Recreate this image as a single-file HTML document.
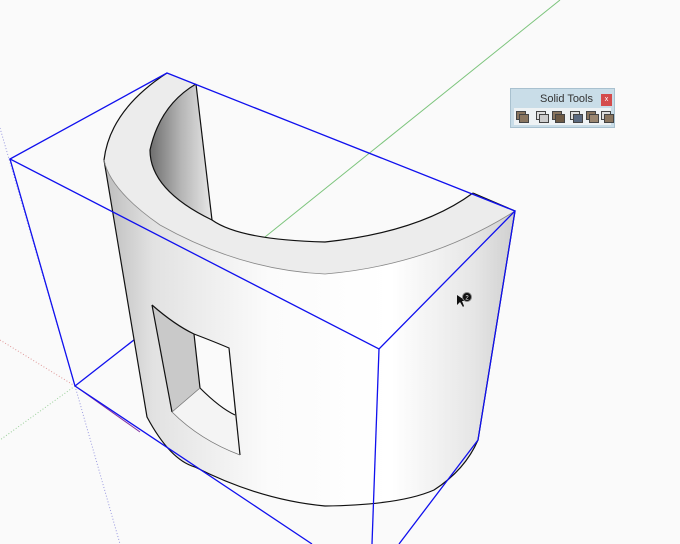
<!DOCTYPE html>
<html><head><meta charset="utf-8"><style>
body{margin:0;width:680px;height:544px;overflow:hidden;background:#fafafa;font-family:"Liberation Sans",sans-serif}
svg{position:absolute;left:0;top:0}
#tb{position:absolute;left:510px;top:88px;width:105px;height:40px;background:#c9dde8;border:1px solid #a9c1cf;box-sizing:border-box}
#tb .t{position:absolute;left:29px;top:4px;font-size:11px;color:#333}
#tb .x{position:absolute;left:90px;top:5px;width:11px;height:12px;background:#d44c4c;color:#fff;font-size:7px;text-align:center;line-height:12px}
#tb .bar{position:absolute;left:3px;top:19px;width:97px;height:17px;background:#eef2f4}
#tb .i{position:absolute;top:22px;width:12px;height:11px}
#tb .i b{position:absolute;width:8px;height:7px;background:#8a7660;border:1px solid #444}
</style></head><body>
<svg width="680" height="544" viewBox="0 0 680 544">
<defs>
<linearGradient id="cyl" x1="104" y1="0" x2="515" y2="0" gradientUnits="userSpaceOnUse">
<stop offset="0" stop-color="#bdbdbd"/><stop offset="0.12" stop-color="#e2e2e2"/><stop offset="0.4" stop-color="#fbfbfb"/><stop offset="0.7" stop-color="#ffffff"/><stop offset="0.9" stop-color="#e6e6e6"/><stop offset="1" stop-color="#cfcfcf"/>
</linearGradient>
<linearGradient id="inn" x1="150" y1="0" x2="212" y2="0" gradientUnits="userSpaceOnUse">
<stop offset="0" stop-color="#6e6e6e"/><stop offset="0.5" stop-color="#b5b5b5"/><stop offset="1" stop-color="#e8e8e8"/>
</linearGradient>
</defs>
<line x1="560" y1="0" x2="265" y2="237" stroke="#7cc47c" stroke-width="1"/>
<line x1="0" y1="128" x2="75" y2="386" stroke="#9a9ae0" stroke-width="1" stroke-dasharray="1,2"/>
<line x1="75" y1="386" x2="120" y2="544" stroke="#9a9ae0" stroke-width="1" stroke-dasharray="1,2"/>
<line x1="0" y1="340" x2="75" y2="386" stroke="#e09a9a" stroke-width="1" stroke-dasharray="1,2"/>
<line x1="75" y1="386" x2="0" y2="440" stroke="#9ad09a" stroke-width="1" stroke-dasharray="1,2"/>
<line x1="75" y1="386" x2="140" y2="432" stroke="#8030a0" stroke-width="1"/>
<line x1="75" y1="386" x2="139" y2="336" stroke="#1010ee" stroke-width="1.3"/>
<!-- cylinder body -->
<path d="M104,160 Q110,190 160,225 Q240,270 325,274 Q430,265 515,211 L478,440 Q465,470 434,490 Q400,505 325,506 Q260,500 195,467 Q170,460 147,417 Z" fill="url(#cyl)"/>
<!-- top ring face -->
<path d="M167,73 Q110,110 104,160 Q110,190 160,225 Q240,270 325,274 Q430,265 515,211 L473,193 Q420,232 325,242 Q240,240 212,220 Q150,190 150,150 Q160,105 196,84 Z" fill="#ececec"/>
<path d="M196,84 Q160,105 150,150 Q150,190 212,220 Z" fill="url(#inn)"/>
<!-- window -->
<path d="M152,305 Q175,325 194,334 Q215,342 229,348 L240,455 Q200,440 172,412 Z" fill="#c9c9c9"/>
<path d="M172,412 L200,388 Q220,408 235,415 L240,455 Q200,440 172,412 Z" fill="#f4f4f4"/>
<path d="M194,334 Q215,342 229,348 L235,415 Q220,408 200,388 Z" fill="#fafafa"/>
<g fill="none" stroke="#111" stroke-width="1.2">
<path d="M152,305 Q175,325 194,334 Q215,342 229,348 L240,455"/>
<path d="M194,334 L200,388 Q220,408 235,415"/>
<path d="M152,305 L172,412"/>
<path d="M200,388 L172,412" stroke="#777" stroke-width="0.8"/>
<path d="M172,412 Q200,440 240,455" stroke="#777" stroke-width="0.8"/>
<path d="M167,73 Q110,110 104,160 L147,417 Q170,460 195,467 Q260,500 325,506 Q400,505 434,490 Q465,470 478,440 L515,211 L473,193"/>
<path d="M196,84 Q160,105 150,150 Q150,190 212,220 Q240,240 325,242 Q420,232 473,193"/>
<path d="M196,84 L212,220"/>
<path d="M104,160 Q110,190 160,225 Q240,270 325,274 Q430,265 515,211" stroke="#888" stroke-width="0.8"/>
</g>
<g stroke="#1010ee" stroke-width="1.3" fill="none">
<path d="M167,73 L10,159 L379,349 L515,211 Z"/>
<path d="M10,159 L75,386 L312,544"/>
<path d="M379,349 L372,544"/>
<path d="M515,211 L478,440 L399,544"/>
</g>
<path d="M457,295 L457,305 L460,302 L463,307 L464,306 L462,301 L466,301 Z" fill="#111"/>
<circle cx="467" cy="297" r="4.5" fill="#111" stroke="#888" stroke-width="1"/>
<text x="467" y="299.5" font-size="6" fill="#fff" text-anchor="middle" font-family="Liberation Sans">2</text>
</svg>
<div id="tb"><div class="t">Solid Tools</div><div class="x">x</div><div class="bar"></div>
<div class="i" style="left:5px"><b style="left:0;top:0"></b><b style="left:3px;top:3px"></b></div>
<div class="i" style="left:25px"><b style="left:0;top:0;background:#ddd"></b><b style="left:3px;top:3px;background:#ccc"></b></div>
<div class="i" style="left:41px"><b style="left:0;top:0"></b><b style="left:3px;top:3px;background:#6d5a45"></b></div>
<div class="i" style="left:59px"><b style="left:0;top:0;background:#ddd"></b><b style="left:3px;top:3px;background:#5b6a80"></b></div>
<div class="i" style="left:75px"><b style="left:0;top:0"></b><b style="left:3px;top:3px;background:#9a8670"></b></div>
<div class="i" style="left:90px"><b style="left:0;top:0;background:#ddd"></b><b style="left:3px;top:3px"></b></div>
</div>
</body></html>
